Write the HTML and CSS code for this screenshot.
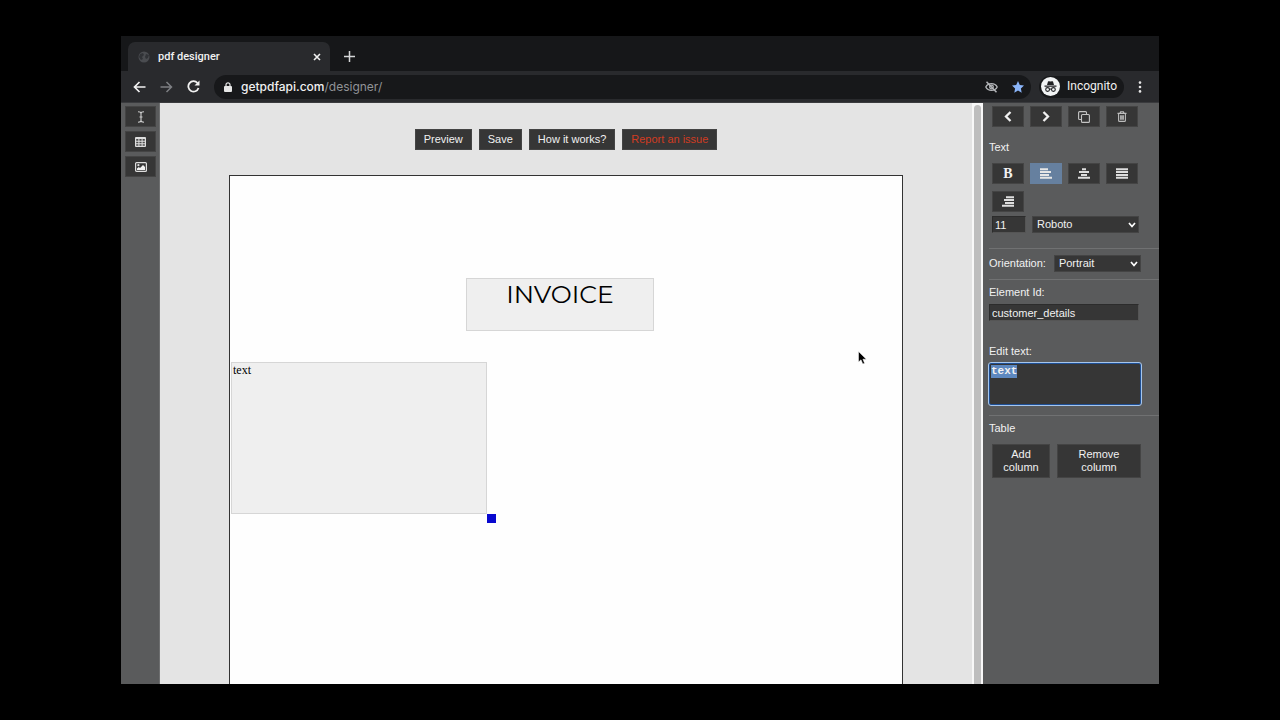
FILE: index.html
```
<!DOCTYPE html>
<html lang="en">
  <head>
    <meta charset="UTF-8" />
    <meta name="viewport" content="width=device-width, initial-scale=1.0" />
    <title>pdf designer</title>
    <link rel="stylesheet" href="styles.css">
  </head>
  <body>
    <div class="window">
      <div class="tab-strip">
        <div class="tab">
          <svg class="tab-icon" width="12" height="12" viewBox="0 0 12 12">
            <circle cx="6" cy="6" r="5.5" fill="#4a4c50" />
            <path d="M2 3L5 2L6 4L4 6L5 8L3 9L1 6ZM8 3L11 4L10 7L8 8L7 6Z" fill="#303236" />
          </svg>
          <span class="tab-title">pdf designer</span>
          <button class="chrome-btn" aria-label="Close tab">
            <svg width="8" height="8" viewBox="0 0 8 8" stroke="#f1f1f1" stroke-width="1.6">
              <path d="M1 1L7 7M7 1L1 7" />
            </svg>
          </button>
        </div>
        <button class="chrome-btn" aria-label="New tab">
          <svg width="11" height="11" viewBox="0 0 11 11" stroke="#d5d6d8" stroke-width="1.5">
            <path d="M5.5 0V11M0 5.5H11" />
          </svg>
        </button>
      </div>

      <div class="nav-bar">
        <button class="chrome-btn" aria-label="Back">
          <svg width="13" height="12" viewBox="0 0 13 12" fill="none" stroke="#f1f1f1" stroke-width="1.7">
            <path d="M12.5 6H1.5M6.5 1L1.5 6L6.5 11" />
          </svg>
        </button>
        <button class="chrome-btn" aria-label="Forward">
          <svg width="13" height="12" viewBox="0 0 13 12" fill="none" stroke="#7d7f83" stroke-width="1.5">
            <path d="M0.5 6H11.5M6.5 1L11.5 6L6.5 11" />
          </svg>
        </button>
        <button class="chrome-btn" aria-label="Reload">
          <svg width="13" height="13" viewBox="0 0 13 13">
            <path d="M10.5 3A5.2 5.2 0 1 0 11.5 8" fill="none" stroke="#f1f1f1" stroke-width="1.8" />
            <path d="M12.5 0.5V5.5H7.5Z" fill="#f1f1f1" />
          </svg>
        </button>
        <div class="address-bar">
          <svg width="8" height="10" viewBox="0 0 8 10">
            <rect x="0" y="4" width="8" height="6" rx="1" fill="#e6e6e6" />
            <path d="M2 4.5V2.8A2 2 0 0 1 6 2.8V4.5" fill="none" stroke="#e6e6e6" stroke-width="1.2" />
          </svg>
          <span class="url">getpdfapi.com<span class="url-path">/designer/</span></span>
          <svg width="13" height="12" viewBox="0 0 13 12" fill="none" stroke="#b4b6b9" stroke-width="1.3">
            <path d="M0.8 6C3 1.5 10 1.5 12.2 6C10 10.5 3 10.5 0.8 6Z" />
            <circle cx="6.5" cy="6" r="1.8" />
            <path d="M1.5 0.8L11.5 11.2" stroke-width="1.5" />
          </svg>
          <svg width="12" height="12" viewBox="0 0 12 12">
            <path d="M6 0L7.8 4L12 4.5L8.9 7.4L9.7 11.8L6 9.6L2.3 11.8L3.1 7.4L0 4.5L4.2 4Z" fill="#8ab4f8" />
          </svg>
        </div>
        <div class="incognito">
          <svg width="19" height="19" viewBox="0 0 19 19">
            <circle cx="9.5" cy="9.5" r="9.5" fill="#f1f3f4" />
            <path d="M6 8L7 4.5Q7.2 4 8 4.2L9.5 4.6L11 4.2Q11.8 4 12 4.5L13 8ZM3.5 8.5H15.5V9.7H3.5Z" fill="#202124" />
            <g fill="none" stroke="#202124" stroke-width="1.1">
              <circle cx="6.6" cy="12.5" r="1.9" />
              <circle cx="12.4" cy="12.5" r="1.9" />
              <path d="M8.5 12.3Q9.5 11.6 10.5 12.3" />
            </g>
          </svg>
          <span>Incognito</span>
        </div>
        <button class="chrome-btn menu-btn" aria-label="Menu">
          <svg width="4" height="12" viewBox="0 0 4 12" fill="#e6e6e6">
            <circle cx="2" cy="1.6" r="1.3" />
            <circle cx="2" cy="6" r="1.3" />
            <circle cx="2" cy="10.4" r="1.3" />
          </svg>
        </button>
      </div>

      <div class="app">
        <nav class="tools">
          <button class="btn" aria-label="Add text">
            <svg width="8" height="12" viewBox="0 0 8 12" fill="none" stroke="#cfcfcf" stroke-width="1.1">
              <path d="M1 0.8Q4 0.8 4 2.5Q4 0.8 7 0.8M4 2.5V9.5M1 11.2Q4 11.2 4 9.5Q4 11.2 7 11.2M2.5 6H5.5" />
            </svg>
          </button>
          <button class="btn" aria-label="Add table">
            <svg width="11" height="10" viewBox="0 0 11 10">
              <rect width="11" height="10" rx="1" fill="#dedede" />
              <path d="M1.2 2H3.4V3.8H1.2ZM4.4 2H6.6V3.8H4.4ZM7.6 2H9.8V3.8H7.6ZM1.2 4.7H3.4V6.3H1.2ZM4.4 4.7H6.6V6.3H4.4ZM7.6 4.7H9.8V6.3H7.6ZM1.2 7.2H3.4V8.8H1.2ZM4.4 7.2H6.6V8.8H4.4ZM7.6 7.2H9.8V8.8H7.6Z" fill="#4c4c4c" />
            </svg>
          </button>
          <button class="btn" aria-label="Add image">
            <svg width="12" height="10" viewBox="0 0 12 10">
              <rect x="0.6" y="0.6" width="10.8" height="8.8" rx="1" fill="none" stroke="#dedede" stroke-width="1.2" />
              <circle cx="3.4" cy="3.2" r="1.1" fill="#dedede" />
              <path d="M2 8V6.5L3.8 5L5 6L8 3L10 5V8Z" fill="#f1f1f1" />
            </svg>
          </button>
        </nav>

        <main class="workspace">
          <div class="actions">
            <button class="btn">Preview</button>
            <button class="btn">Save</button>
            <button class="btn">How it works?</button>
            <button class="btn btn-report">Report an issue</button>
          </div>
          <div class="page">
            <div class="element element-title">INVOICE</div>
            <div class="element element-text">text<span class="resize-handle"></span></div>
            <svg class="cursor" width="9" height="14" viewBox="0 0 9 14">
              <path d="M0.5 0.5V11L3 8.8L4.8 13L6.6 12.2L4.9 8.2H8.3Z" fill="#000" stroke="#fff" stroke-width="0.5" />
            </svg>
          </div>
        </main>
        <div class="scrollbar"><div class="scroll-thumb"></div></div>

        <aside class="sidebar">
          <section class="panel">
            <div class="icon-grid">
              <button class="btn" aria-label="Previous">
                <svg width="8" height="11" viewBox="0 0 8 11" fill="none" stroke="#f1f1f1" stroke-width="2.3">
                  <path d="M6.5 1L2 5.5L6.5 10" />
                </svg>
              </button>
              <button class="btn" aria-label="Next">
                <svg width="8" height="11" viewBox="0 0 8 11" fill="none" stroke="#f1f1f1" stroke-width="2.3">
                  <path d="M1.5 1L6 5.5L1.5 10" />
                </svg>
              </button>
              <button class="btn" aria-label="Duplicate">
                <svg width="12" height="12" viewBox="0 0 12 12" fill="none" stroke="#c4c4c4" stroke-width="1.1">
                  <rect x="3.5" y="3.5" width="7.9" height="7.9" rx="1" />
                  <path d="M3.5 8.5H1.6Q0.6 8.5 0.6 7.5V1.6Q0.6 0.6 1.6 0.6H7.5Q8.5 0.6 8.5 1.6V3.5" />
                </svg>
              </button>
              <button class="btn" aria-label="Delete">
                <svg width="10" height="11" viewBox="0 0 10 11" fill="none" stroke="#bdbdbd" stroke-width="1.1">
                  <path d="M0.5 2.4H9.5M3 2.2L3.6 0.7H6.4L7 2.2M1.6 2.5V9.4Q1.6 10.4 2.6 10.4H7.4Q8.4 10.4 8.4 9.4V2.5M3.7 4.2V8.8M5 4.2V8.8M6.3 4.2V8.8" />
                </svg>
              </button>
            </div>
            <h2>Text</h2>
            <div class="icon-grid">
              <button class="btn btn-bold" aria-label="Bold">B</button>
              <button class="btn active" aria-label="Align left">
                <svg width="12" height="11" viewBox="0 0 12 11" stroke="#e6e6e6" stroke-width="2">
                  <path d="M0 1.3H8M0 4.1H11M0 6.9H9M0 9.7H12" />
                </svg>
              </button>
              <button class="btn" aria-label="Align center">
                <svg width="12" height="11" viewBox="0 0 12 11" stroke="#dedede" stroke-width="2">
                  <path d="M4 1.3H8M1 4.1H11M3 6.9H9M0 9.7H12" />
                </svg>
              </button>
              <button class="btn" aria-label="Justify">
                <svg width="12" height="11" viewBox="0 0 12 11" stroke="#dedede" stroke-width="2">
                  <path d="M0 1.3H12M0 4.1H12M0 6.9H12M0 9.7H12" />
                </svg>
              </button>
              <button class="btn" aria-label="Align right">
                <svg width="12" height="11" viewBox="0 0 12 11" stroke="#dedede" stroke-width="2">
                  <path d="M4 1.3H12M2 4.1H12M3 6.9H12M0 9.7H12" />
                </svg>
              </button>
            </div>
            <div class="font-row">
              <input class="field" type="text" value="11" aria-label="Font size" />
              <select class="field" aria-label="Font family">
                <option>Roboto</option>
              </select>
            </div>
          </section>

          <section class="panel orientation">
            <label for="orientation">Orientation:</label>
            <select class="field" id="orientation">
              <option>Portrait</option>
            </select>
          </section>

          <section class="panel edit-panel">
            <label for="element-id">Element Id:</label>
            <input class="field" type="text" id="element-id" value="customer_details" />
            <label for="edit-text">Edit text:</label>
            <textarea id="edit-text" spellcheck="false">text</textarea>
          </section>

          <section class="panel">
            <h2>Table</h2>
            <div class="table-actions">
              <button class="btn">Add column</button>
              <button class="btn">Remove column</button>
            </div>
          </section>
        </aside>
      </div>
    </div>
    <script src="script.js"></script>
  </body>
</html>
```
FILE: styles.css
```
* {
  box-sizing: border-box;
}

body {
  margin: 0;
  height: 100vh;
  padding: 36px 121px;
  background: #000;
  color: #f1f1f1;
  font-family: "Liberation Sans", Arial, sans-serif;
  font-size: 11px;
  line-height: 13px;
}

svg {
  display: block;
  flex-shrink: 0;
}

button,
input,
select,
textarea {
  margin: 0;
  font: inherit;
  color: inherit;
}

.window {
  height: 100%;
  display: flex;
  flex-direction: column;
  overflow: hidden;
}

/* browser chrome */
.tab-strip {
  display: flex;
  align-items: center;
  gap: 14px;
  height: 35px;
  padding: 6px 7px 0;
  background: #161719;
}

.tab {
  display: flex;
  align-items: center;
  gap: 8px;
  width: 202px;
  height: 29px;
  padding: 0 9px 0 10px;
  border-radius: 7px 7px 0 0;
  background: #292a2d;
}

.tab-title {
  flex: 1;
  font-family: Roboto, sans-serif;
  font-weight: 500;
}

.chrome-btn {
  display: flex;
  padding: 0;
  border: none;
  background: none;
}

.nav-bar {
  display: flex;
  align-items: center;
  gap: 14px;
  height: 32px;
  padding: 0 17px 0 12px;
  background: #292a2d;
  border-bottom: 1px solid #3a3b3e;
  font-family: Roboto, sans-serif;
  font-size: 12px;
  font-weight: 500;
}

.address-bar {
  flex: 1;
  display: flex;
  align-items: center;
  gap: 14px;
  height: 24px;
  padding: 0 7px 0 10px;
  border-radius: 12px;
  background: #17181a;
}

.address-bar .url {
  flex: 1;
  margin-left: -5px;
  font-family: Inter, sans-serif;
}

.url-path {
  font-weight: 400;
  color: #919397;
}

.incognito {
  display: flex;
  align-items: center;
  gap: 7px;
  height: 22px;
  margin-left: -6px;
  padding: 0 7px 0 2px;
  border-radius: 11px;
  background: #17181a;
  font-weight: 400;
}

/* designer */
.app {
  flex: 1;
  min-height: 0;
  display: flex;
}

.btn {
  display: flex;
  align-items: center;
  justify-content: center;
  min-height: 21px;
  padding: 0 8px;
  border: 1px solid #444;
  background: #363636;
}

.tools {
  display: flex;
  flex-direction: column;
  gap: 4px;
  width: 39px;
  padding: 3px 3px 0 4px;
  background: #5a5b5c;
  border-right: 1px solid #6e6f70;
}

.workspace {
  flex: 1;
  display: flex;
  flex-direction: column;
  align-items: center;
  gap: 25px;
  padding-top: 26px;
  background: #e4e4e4;
}

.actions {
  display: flex;
  gap: 7px;
}

.btn-report {
  color: #d13c22;
}

.page {
  position: relative;
  flex: 1;
  width: 83%;
  border: 1px solid #333;
  border-bottom: none;
  background: #fefefe;
  color: #000;
}

.element {
  position: absolute;
  border: 1px solid #d6d6d6;
  background: #efefef;
}

.element-title {
  top: 102px;
  left: 236px;
  width: 188px;
  height: 53px;
  font-family: Montserrat, Lato, sans-serif;
  font-size: 25px;
  line-height: 30px;
  text-align: center;
}

.element-text {
  top: 186px;
  left: 1px;
  width: 256px;
  height: 152px;
  padding: 1px;
  font-family: "Liberation Serif", "Times New Roman", serif;
  font-size: 12px;
}

.resize-handle {
  position: absolute;
  right: -10px;
  bottom: -10px;
  width: 9px;
  height: 9px;
  background: #0808cf;
}

.cursor {
  position: absolute;
  top: 175px;
  left: 628px;
}

.scrollbar {
  width: 11px;
  padding: 2px 2px 0;
  background: #f8f8f8;
}

.scroll-thumb {
  height: 100%;
  border-radius: 4px 4px 0 0;
  background: #bebebe;
}

/* properties sidebar */
.sidebar {
  width: 176px;
  padding-left: 6px;
  background: #5a5b5c;
}

.panel {
  padding-bottom: 15px;
  border-bottom: 1px solid #707172;
}

.panel:last-child {
  border-bottom: none;
}

.panel h2 {
  margin: 0;
  padding: 6px 0;
  font-size: 11px;
  font-weight: 400;
}

.icon-grid {
  display: grid;
  grid-template-columns: repeat(4, 32px);
  gap: 7px 6px;
  padding: 3px;
}

.icon-grid + h2 {
  padding-top: 11px;
}

.icon-grid .btn {
  padding: 0;
}

.icon-grid .active {
  background: #66809f;
  border-color: #66809f;
}

.btn-bold {
  font-family: "Liberation Serif", serif;
  font-size: 14px;
  font-weight: 700;
}

.field {
  height: 17px;
  padding: 0 2px;
  border: 1px solid #444;
  border-radius: 0;
  background-color: #363636;
}

input.field {
  border-color: #2c2c2c #555 #555 #2c2c2c;
}

select.field {
  appearance: none;
  padding: 0 18px 0 4px;
  background-image: url("data:image/svg+xml,%3Csvg xmlns='http://www.w3.org/2000/svg' width='8' height='6' fill='none' stroke='white' stroke-width='1.7'%3E%3Cpath d='M1 1L4 4.5L7 1'/%3E%3C/svg%3E");
  background-repeat: no-repeat;
  background-position: right 2px center;
}

.font-row {
  display: flex;
  gap: 6px;
  padding: 1px 20px 0 3px;
}

.font-row input {
  width: 34px;
}

.font-row select {
  flex: 1;
}

.orientation {
  display: flex;
  align-items: center;
  gap: 8px;
  padding: 6px 18px 7px 0;
}

.orientation select {
  flex: 1;
}

.edit-panel {
  display: flex;
  flex-direction: column;
  gap: 5px;
  padding: 6px 18px 10px 0;
}

.edit-panel input {
  margin: 0 2px 19px 0;
}

.edit-panel textarea {
  display: block;
  height: 42px;
  padding: 1px;
  border: 1px solid #1f4f94;
  border-radius: 2px;
  outline: 1px solid #a5c6ee;
  resize: none;
  background: #363636;
  font-family: "Liberation Mono", monospace;
  font-weight: 700;
}

.edit-panel textarea::selection {
  background: #5d88c0;
  color: #f1f1f1;
}

.table-actions {
  display: grid;
  grid-template-columns: 58px 1fr;
  gap: 7px;
  padding: 3px 18px 0 3px;
}

.table-actions .btn {
  min-height: 34px;
}
```
FILE: script.js
```
const editText = document.getElementById("edit-text");
editText.focus();
editText.select();
```
